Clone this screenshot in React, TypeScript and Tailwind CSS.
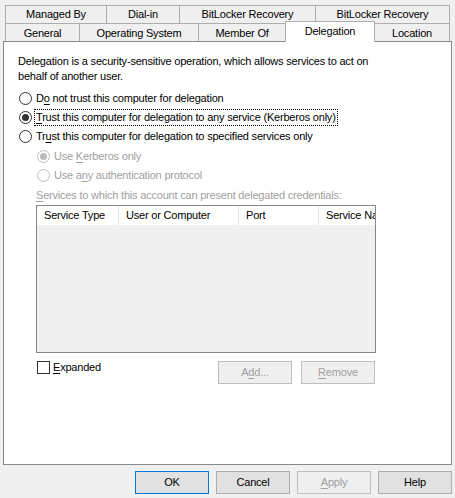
import type { ReactNode } from "react";

const topTabs = [
  { label: "Managed By", cls: "w-[102px]" },
  { label: "Dial-in", cls: "w-[74px] -ml-px" },
  { label: "BitLocker Recovery", cls: "w-[137px] -ml-px" },
  { label: "BitLocker Recovery", cls: "w-[135px] -ml-px" },
];

const columns = [
  { label: "Service Type", cls: "w-[82px] border-r" },
  { label: "User or Computer", cls: "w-[120px] border-r" },
  { label: "Port", cls: "w-[80px] border-r" },
  { label: "Service Name", cls: "flex-1" },
];

const Radio = ({ checked, disabled }: { checked?: boolean; disabled?: boolean }) => (
  <span
    className={
      disabled
        ? "flex h-[13px] w-[13px] shrink-0 items-center justify-center rounded-full border border-[#bcbcbc] bg-white"
        : "flex h-[13px] w-[13px] shrink-0 items-center justify-center rounded-full border border-[#333333] bg-white"
    }
  >
    {checked && (
      <span className={disabled ? "h-[7px] w-[7px] rounded-full bg-[#bcbcbc]" : "h-[7px] w-[7px] rounded-full bg-[#333333]"} />
    )}
  </span>
);

const Key = ({ children }: { children: ReactNode }) => <span className="underline underline-offset-[2px]">{children}</span>;

const Tab = ({ label, cls }: { label: string; cls: string }) => (
  <div className={`flex h-[18px] items-center justify-center border border-b-0 border-[#adadad] bg-[#f0f0f0] ${cls}`}>
    {label}
  </div>
);

const Button = ({ children, kind = "normal", cls = "" }: { children: ReactNode; kind?: "default" | "normal" | "disabled"; cls?: string }) => {
  const look =
    kind === "default"
      ? "border-[#0078d7] bg-[#e1e1e1] text-black"
      : kind === "disabled"
        ? "border-[#bfbfbf] bg-[#efefef] text-[#a0a0a0]"
        : "border-[#adadad] bg-[#e1e1e1] text-black";
  return <div className={`flex h-[23px] w-[74px] items-center justify-center border ${look} ${cls}`}>{children}</div>;
};

export default function App() {
  return (
    <div className="h-[498px] w-[455px] bg-[#f0f0f0] pt-[5px] font-['Liberation_Sans',Arial,sans-serif] text-[11px] tracking-[-0.2px] text-black">
      {/* tab strip, two rows */}
      <div className="flex pl-[5px]">
        {topTabs.map((t, i) => (
          <Tab key={i} label={t.label} cls={t.cls} />
        ))}
      </div>
      <div className="flex h-[18px] items-end pl-[5px]">
        <Tab label="General" cls="w-[75px] pt-[1px]" />
        <Tab label="Operating System" cls="w-[120px] -ml-px pt-[1px]" />
        <Tab label="Member Of" cls="w-[88px] -ml-px pt-[1px]" />
        <div className="relative z-10 -mb-px -ml-px flex h-[21px] w-[90px] items-center justify-center border border-b-0 border-[#adadad] bg-white pb-[1px]">
          Delegation
        </div>
        <Tab label="Location" cls="w-[76px] -ml-px pt-[1px]" />
      </div>

      {/* page */}
      <div className="ml-[3px] h-[424px] w-[449px] border border-[#898989] bg-white pl-[14px] pt-[12px]">
        <p className="w-[372px] leading-[15px]">
          Delegation is a security-sensitive operation, which allows services to act on behalf of another user.
        </p>

        <div className="mt-[5px] flex flex-col">
          <div className="flex h-[19px] items-center gap-[3px] pl-[1px]">
            <Radio />
            <span className="px-[1px]">
              D<Key>o</Key> not trust this computer for delegation
            </span>
          </div>
          <div className="flex h-[19px] items-center gap-[2px] pl-[1px]">
            <Radio checked />
            <span className="border border-dotted border-black px-[1px] leading-[15px]">
              <Key>T</Key>rust this computer for delegation to any service (Kerberos only)
            </span>
          </div>
          <div className="flex h-[19px] items-center gap-[3px] pl-[1px]">
            <Radio />
            <span className="px-[1px]">
              Tr<Key>u</Key>st this computer for delegation to specified services only
            </span>
          </div>

          <div className="flex h-[19px] items-center gap-[3px] pl-[19px] pt-[1px] text-[#a0a0a0]">
            <Radio checked disabled />
            <span className="px-[1px]">
              Use <Key>K</Key>erberos only
            </span>
          </div>
          <div className="flex h-[19px] items-center gap-[3px] pl-[19px] pt-[1px] text-[#a0a0a0]">
            <Radio disabled />
            <span className="px-[1px]">
              Use a<Key>n</Key>y authentication protocol
            </span>
          </div>
        </div>

        <div className="ml-[18px] mt-[2px] flex h-[19px] items-center text-[#a0a0a0]">
          <Key>S</Key>ervices to which this account can present delegated credentials:
        </div>

        {/* delegated services list */}
        <div className="ml-[18px] h-[148px] w-[340px] overflow-hidden border border-[#828790] bg-[#f0f0f0]">
          <div className="flex h-[19px] bg-white">
            {columns.map((c) => (
              <div key={c.label} className={`flex items-center overflow-hidden whitespace-nowrap border-[#e5e5e5] pl-[7px] ${c.cls}`}>
                {c.label}
              </div>
            ))}
          </div>
        </div>

        <div className="ml-[18px] mt-[8px] flex w-[340px] items-start justify-between">
          <div className="flex h-[13px] items-center gap-[3px] pl-[1px]">
            <span className="h-[13px] w-[13px] border border-[#333333] bg-white" />
            <span>
              <Key>E</Key>xpanded
            </span>
          </div>
          <div className="mr-[1px] flex gap-[9px]">
            <Button kind="disabled">
              <span>
                A<Key>d</Key>d...
              </span>
            </Button>
            <Button kind="disabled">
              <span>
                <Key>R</Key>emove
              </span>
            </Button>
          </div>
        </div>
      </div>

      {/* dialog buttons */}
      <div className="mt-[6px] flex justify-end gap-[7px] pr-[3px]">
        <Button kind="default">OK</Button>
        <Button>Cancel</Button>
        <Button kind="disabled">
          <span>
            <Key>A</Key>pply
          </span>
        </Button>
        <Button>Help</Button>
      </div>
    </div>
  );
}
